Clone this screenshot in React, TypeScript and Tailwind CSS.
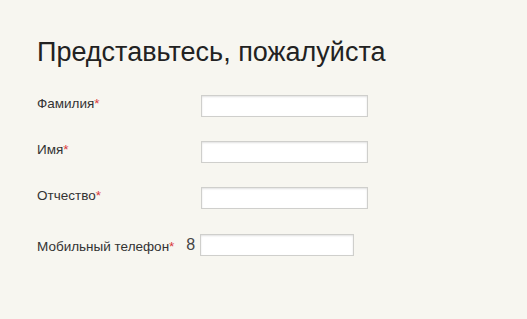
import React from "react";

const fields = ["Фамилия", "Имя", "Отчество"];

const Req = () => <span className="text-[#d9383a]">*</span>;

const inputCls =
  "h-[22px] bg-white border border-[#cfcfcc] shadow-[inset_0_1px_2px_rgba(0,0,0,0.12)] outline-none px-1 text-[13px]";

export default function App() {
  return (
    <div
      className="w-[527px] h-[319px] bg-[#f7f6f0] pl-[37px] pt-[37px] text-[#333]"
      style={{ fontFamily: '"Liberation Sans", Arial, sans-serif' }}
    >
      <h1 className="text-[27px] leading-[31px] text-[#222] font-normal">
        Представьтесь, пожалуйста
      </h1>
      <form className="mt-[27px] flex flex-col gap-[24px]">
        {fields.map((f) => (
          <div key={f} className="flex items-start">
            <label className="w-[164px] text-[13.5px] leading-[15px] pt-[1px]">
              {f}
              <Req />
            </label>
            <input type="text" className={`${inputCls} w-[167px]`} />
          </div>
        ))}
        <div className="flex items-center mt-[1px]">
          <label className="text-[13.5px] leading-[15px] pt-[3px]">
            Мобильный телефон
            <Req />
          </label>
          <span className="ml-[12px] mr-[5px] text-[16px] leading-[18px] text-[#444]">8</span>
          <input type="tel" className={`${inputCls} w-[154px]`} />
        </div>
      </form>
    </div>
  );
}
